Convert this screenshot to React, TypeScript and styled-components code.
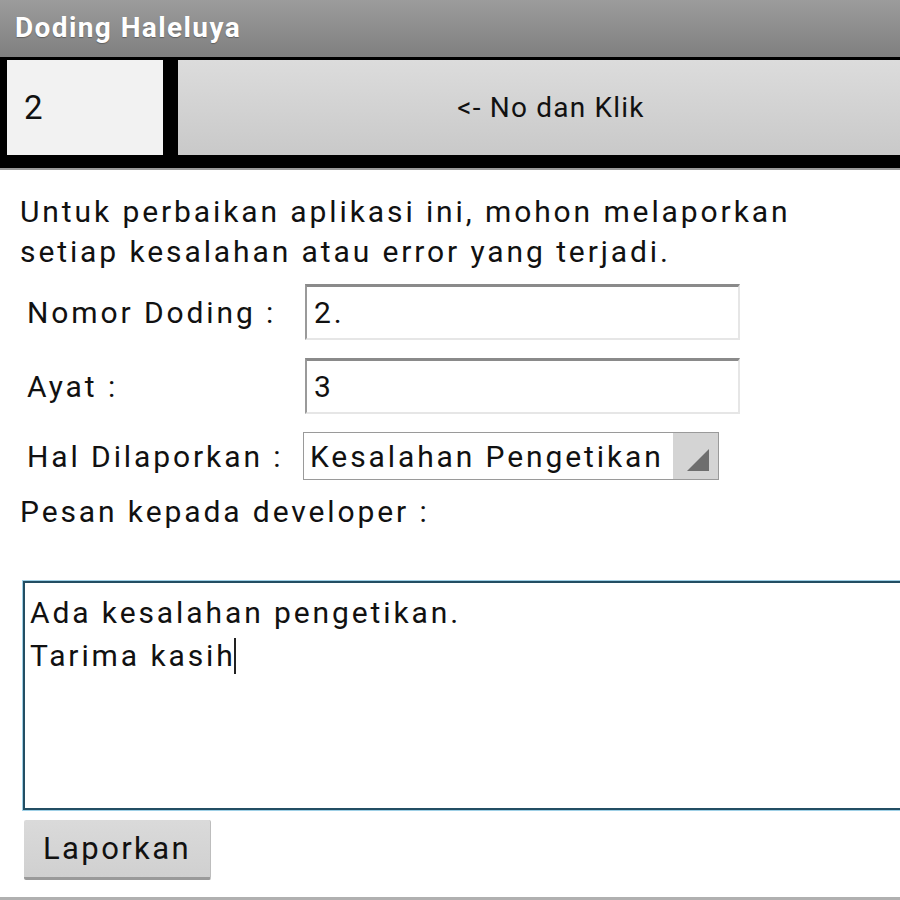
import styled, { createGlobalStyle } from "styled-components";

const GlobalStyle = createGlobalStyle`
  html, body {
    margin: 0;
    padding: 0;
    background: #ffffff;
    font-family: Roboto, "Noto Sans", sans-serif;
  }
`;

// Styled components
const Screen = styled.div`
  width: 900px;
  height: 900px;
  overflow: hidden;
  display: flex;
  flex-direction: column;
  background: #ffffff;
  border-bottom: 3px solid #b0b0b0;
  box-sizing: border-box;
  color: #111;
  letter-spacing: 2.9px;
`;

const TitleBar = styled.div`
  height: 57px;
  display: flex;
  align-items: center;
  padding: 0 0 2px 15px;
  box-sizing: border-box;
  background: linear-gradient(#9c9c9c, #7f7f7f);
  color: #ffffff;
  font-size: 28px;
  font-weight: bold;
  letter-spacing: 1.4px;
  text-shadow: 0 1px 1px rgba(0, 0, 0, 0.3);
`;

const TopRow = styled.div`
  display: flex;
  gap: 15px;
  background: #000000;
  padding: 3px 0 13px 7px;
  border-bottom: 2px solid #9a9a9a;
`;

const NumberBox = styled.div`
  width: 156px;
  height: 95px;
  display: flex;
  align-items: center;
  padding-left: 17px;
  box-sizing: border-box;
  background: #f2f2f2;
  font-size: 33px;
`;

const WideButton = styled.div`
  flex: 1;
  height: 95px;
  display: flex;
  align-items: center;
  justify-content: center;
  background: linear-gradient(#dcdcdc, #c9c9c9);
  font-size: 28px;
  letter-spacing: 1.2px;
  padding-left: 24px;
`;

const Body = styled.div`
  display: flex;
  flex-direction: column;
  padding: 22px 0 0 20px;
`;

const Intro = styled.p`
  margin: 0;
  font-size: 30px;
  line-height: 40px;
`;

const Form = styled.div`
  display: grid;
  grid-template-columns: 278px auto;
  row-gap: 18px;
  margin: 12px 0 0 7px;
  align-items: center;
  justify-items: start;
`;

const Label = styled.span`
  font-size: 30px;
`;

const TextInput = styled.div`
  width: 435px;
  height: 56px;
  box-sizing: border-box;
  display: flex;
  align-items: center;
  padding-left: 7px;
  font-size: 30px;
  background: #ffffff;
  border-top: 3px solid #8a8a8a;
  border-left: 2px solid #9a9a9a;
  border-right: 2px solid #e6e6e6;
  border-bottom: 2px solid #e6e6e6;
`;

const Select = styled.div`
  width: 416px;
  height: 48px;
  margin-left: -2px;
  box-sizing: border-box;
  display: flex;
  border: 1px solid #9a9a9a;
  background: #ffffff;
`;

const SelectText = styled.span`
  flex: 1;
  display: flex;
  align-items: center;
  padding-left: 6px;
  font-size: 30px;
  white-space: nowrap;
  overflow: hidden;
`;

const SelectArrow = styled.span`
  width: 45px;
  display: flex;
  align-items: flex-end;
  justify-content: flex-end;
  padding: 0 9px 8px 0;
  box-sizing: border-box;
  background: #d4d4d4;
`;

const MessageLabel = styled.span`
  margin-top: 14px;
  font-size: 30px;
`;

const TextArea = styled.div`
  margin: 52px 0 0 3px;
  height: 229px;
  width: 900px;
  box-sizing: border-box;
  border: 2px solid #234e63;
  box-shadow: 0 0 0 1px #9fd0e6;
  padding: 8px 0 0 5px;
  font-size: 30px;
  line-height: 43px;
`;

const Caret = styled.span`
  display: inline-block;
  width: 2px;
  height: 36px;
  margin-left: -2px;
  background: #222;
  vertical-align: -8px;
`;

const ReportButton = styled.div`
  margin: 10px 0 0 4px;
  width: 187px;
  height: 60px;
  box-sizing: border-box;
  display: flex;
  align-items: center;
  justify-content: center;
  background: linear-gradient(#dadada, #d0d0d0);
  border-bottom: 3px solid #9a9a9a;
  border-right: 1px solid #bdbdbd;
  border-radius: 2px;
  font-size: 31px;
  letter-spacing: 2.4px;
`;

const Triangle = () => (
  <svg width="22" height="22" viewBox="0 0 22 22">
    <polygon points="22,0 22,22 0,22" fill="#6e6e6e" />
  </svg>
);

export default function App() {
  return (
    <Screen>
      <GlobalStyle />
      <TitleBar>Doding Haleluya</TitleBar>
      <TopRow>
        <NumberBox>2</NumberBox>
        <WideButton>&lt;- No dan Klik</WideButton>
      </TopRow>
      <Body>
        <Intro>
          Untuk perbaikan aplikasi ini, mohon melaporkan
          <br />
          setiap kesalahan atau error yang terjadi.
        </Intro>
        <Form>
          <Label>Nomor Doding :</Label>
          <TextInput>2.</TextInput>
          <Label>Ayat :</Label>
          <TextInput>3</TextInput>
          <Label>Hal Dilaporkan :</Label>
          <Select>
            <SelectText>Kesalahan Pengetikan</SelectText>
            <SelectArrow>
              <Triangle />
            </SelectArrow>
          </Select>
        </Form>
        <MessageLabel>Pesan kepada developer :</MessageLabel>
        <TextArea>
          Ada kesalahan pengetikan.
          <br />
          Tarima kasih
          <Caret />
        </TextArea>
        <ReportButton>Laporkan</ReportButton>
      </Body>
    </Screen>
  );
}
